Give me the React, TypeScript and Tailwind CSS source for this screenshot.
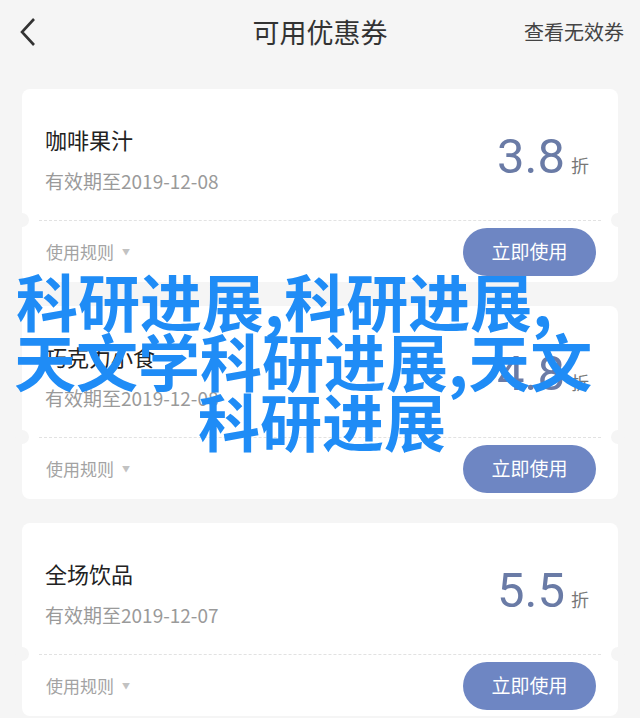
import React from "react";

type Coupon = { title: string; date: string; value: string };

const coupons: Coupon[] = [
  { title: "咖啡果汁", date: "有效期至2019-12-08", value: "3.8" },
  { title: "巧克力小食", date: "有效期至2019-12-08", value: "4.8" },
  { title: "全场饮品", date: "有效期至2019-12-07", value: "5.5" },
];

const cjk = { fontFamily: '"Noto Sans CJK SC", "Noto Sans", sans-serif' };

function Card({ c }: { c: Coupon }) {
  return (
    <div className="relative bg-white rounded-[8px] h-[193px] flex flex-col">
      <div className="h-[131px] flex justify-between pl-[23px] pr-[29px]">
        <div className="flex flex-col pt-[37px]">
          <div className="text-[22px] leading-[26px] text-[#222]">{c.title}</div>
          <div className="mt-[17px] text-[19px] leading-[24px] text-[#9a9a9a]">{c.date}</div>
        </div>
        <div className="flex items-baseline mt-[44px] h-[48px]">
          <span
            className="text-[49px] leading-[48px] text-[#6a7ba6]"
            style={{ fontFamily: 'Roboto, "Liberation Sans", sans-serif' }}
          >
            {c.value}
          </span>
          <span className="ml-[6px] text-[18px] text-[#777]">折</span>
        </div>
      </div>
      <div className="mx-[17px] border-t border-dashed border-[#e2e2e2]" />
      <div className="flex-1 flex items-center justify-between pl-[24px] pr-[22px]">
        <div className="flex items-center text-[17px] text-[#a3a3a3]">
          <span>使用规则</span>
          <span className="ml-[8px] text-[8px] text-[#c2c2c2]">▼</span>
        </div>
        <div className="w-[133px] h-[48px] rounded-full bg-[#6e86c3] flex items-center justify-center text-white text-[19px]">
          立即使用
        </div>
      </div>
      <div className="absolute left-[-7px] top-[124px] w-[14px] h-[14px] rounded-full bg-[#f5f5f5]" />
      <div className="absolute right-[-7px] top-[124px] w-[14px] h-[14px] rounded-full bg-[#f5f5f5]" />
    </div>
  );
}

export default function App() {
  return (
    <div className="relative w-[640px] h-[718px] overflow-hidden bg-[#f5f5f5]" style={cjk}>
      <div className="h-[64px] flex items-center justify-between relative px-[16px]">
        <svg width="20" height="32" viewBox="0 0 20 32" className="ml-[2px]">
          <path d="M16 3 L4 16 L16 29" fill="none" stroke="#333" strokeWidth="2.6" />
        </svg>
        <div className="absolute left-0 right-0 text-center text-[27px] text-[#333] pointer-events-none">
          可用优惠券
        </div>
        <div className="text-[20px] text-[#444]">查看无效券</div>
      </div>
      <div className="px-[22px] pt-[25px] flex flex-col gap-[24px]">
        {coupons.map((c, i) => (
          <Card key={i} c={c} />
        ))}
      </div>
      <div
        className="absolute left-0 top-[270px] w-[640px] text-[62px] leading-[60px] font-bold text-[#1f8cf6]"
        style={{ fontFamily: '"Noto Sans CJK SC", sans-serif' }}
      >
        <div className="ml-[16px] whitespace-nowrap">科研进展,科研进展,</div>
        <div className="ml-[14px] whitespace-nowrap">天文学科研进展,天文</div>
        <div className="ml-[198px] whitespace-nowrap">科研进展</div>
      </div>
    </div>
  );
}
